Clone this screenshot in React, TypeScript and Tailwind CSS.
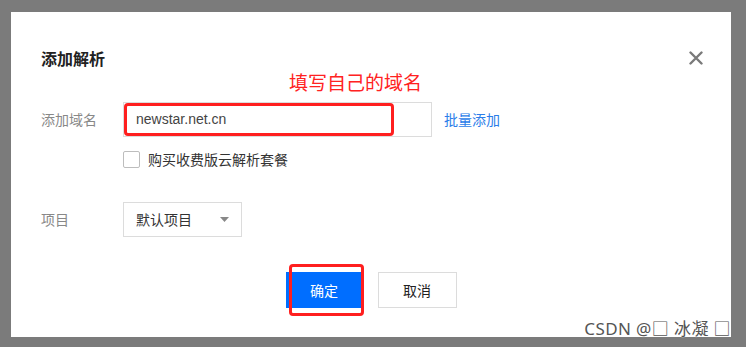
import React from "react";

const cjk = { fontFamily: '"Noto Sans CJK SC", "Noto Sans", sans-serif' };

export default function App() {
  return (
    <div className="w-[746px] h-[347px] bg-[#7b7b7b] pt-[12px] pl-[11px] overflow-hidden" style={cjk}>
      <div className="relative w-[720px] h-[325px] bg-white flex flex-col px-[30px]">
        {/* title */}
        <div className="flex items-center justify-between mt-[36px] h-[20px]">
          <span className="text-[16px] leading-[20px] font-bold text-[#222]">添加解析</span>
          <svg width="14" height="14" viewBox="0 0 14 14" className="mr-[-2px]">
            <path d="M1.5 1.5 L12.5 12.5 M12.5 1.5 L1.5 12.5" stroke="#7a7a7a" strokeWidth="2.4" strokeLinecap="round" />
          </svg>
        </div>
        {/* annotation */}
        <div className="pl-[248px] mt-[2px] text-[19px] leading-[24px] text-[#ff2222]">填写自己的域名</div>
        {/* domain row */}
        <div className="flex items-center mt-[8px] h-[35px]">
          <span className="w-[82px] text-[14px] text-[#888]">添加域名</span>
          <div className="w-[309px] h-[35px] border border-[#dcdcdc] flex items-center pl-[12px] text-[14px] text-[#444]" style={{ fontFamily: '"Liberation Sans", Arial, sans-serif' }}>
            newstar.net.cn
          </div>
          <span className="ml-[12px] text-[14px] text-[#2b7de9]">批量添加</span>
        </div>
        {/* checkbox */}
        <div className="flex items-center mt-[13px] pl-[82px] h-[18px]">
          <span className="w-[17px] h-[17px] border border-[#bdbdbd] rounded-[2px] bg-white" />
          <span className="ml-[8px] text-[14px] text-[#333]">购买收费版云解析套餐</span>
        </div>
        {/* project row */}
        <div className="flex items-center mt-[34px] h-[35px]">
          <span className="w-[82px] text-[14px] text-[#888]">项目</span>
          <div className="w-[119px] h-[35px] border border-[#dcdcdc] flex items-center justify-between pl-[12px] pr-[12px] text-[14px] text-[#333]">
            <span>默认项目</span>
            <svg width="9" height="5" viewBox="0 0 9 5">
              <path d="M0 0 L9 0 L4.5 5 Z" fill="#888" />
            </svg>
          </div>
        </div>
        {/* buttons */}
        <div className="flex justify-center gap-[15px] mt-[35px]">
          <button className="w-[77px] h-[36px] bg-[#006eff] text-white text-[14px]">确定</button>
          <button className="w-[79px] h-[36px] border border-[#dcdcdc] bg-white text-[#222] text-[14px]">取消</button>
        </div>
        {/* red annotation boxes */}
        <div className="absolute left-[113px] top-[91px] w-[270px] h-[33px] border-[3px] border-[#ff1f1f] rounded-[4px]" />
        <div className="absolute left-[278px] top-[252px] w-[75px] h-[52px] border-[3px] border-[#ff1f1f] rounded-[4px]" />
        {/* watermark */}
        <div className="absolute right-[0px] bottom-[-4px] text-[17px] leading-[24px] tracking-[0.4px] text-[#555]" style={{ fontFamily: '"Noto Sans", "Noto Sans CJK SC", sans-serif', textShadow: "0 0 1px #fff, 0 0 1px #fff" }}>
          CSDN @□ 冰凝 □
        </div>
      </div>
    </div>
  );
}
